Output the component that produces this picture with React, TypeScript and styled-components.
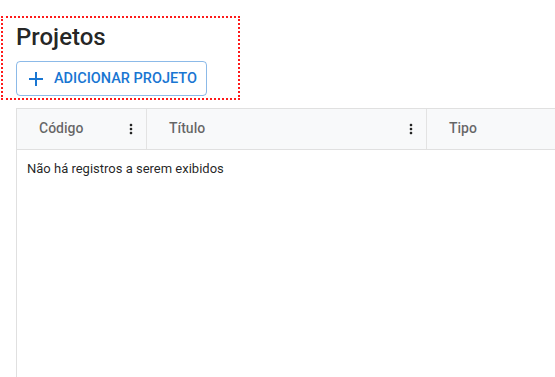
import styled, { createGlobalStyle } from "styled-components";

const GlobalStyle = createGlobalStyle`
  body {
    margin: 0;
    background: #fff;
    font-family: Roboto, "Liberation Sans", sans-serif;
    overflow: hidden;
  }
`;

const Page = styled.div`
  padding-top: 18px;
  width: 555px;
  height: 377px;
  box-sizing: border-box;
  display: flex;
  flex-direction: column;
`;

const HeaderBox = styled.section`
  margin-left: 3px;
  width: 235px;
  height: 80px;
  box-sizing: border-box;
  padding: 3px 0 0 13px;
  outline: 2px dotted #ff1a1a;
  display: flex;
  flex-direction: column;
  align-items: flex-start;
`;

const Title = styled.h1`
  margin: 0;
  font-size: 24px;
  line-height: 32px;
  font-weight: 500;
  color: rgba(0, 0, 0, 0.87);
`;

const OutlinedButton = styled.button`
  margin-top: 8px;
  height: 35px;
  box-sizing: border-box;
  display: inline-flex;
  align-items: center;
  gap: 6px;
  padding: 0 9px 0 7px;
  background: transparent;
  border: 1px solid rgba(25, 118, 210, 0.5);
  border-radius: 4px;
  color: #1976d2;
  font-family: Roboto, "Liberation Sans", sans-serif;
  font-size: 14.5px;
  font-weight: 500;
  letter-spacing: 0;
  text-transform: uppercase;
  cursor: pointer;

  svg {
    width: 24px;
    height: 24px;
    fill: currentColor;
  }
`;

const Grid = styled.div`
  margin: 10px 0 0 16px;
  flex: 1;
  display: flex;
  flex-direction: column;
  border-top: 1px solid #e0e0e0;
  border-left: 1px solid #e0e0e0;
`;

const HeadRow = styled.div`
  display: flex;
  height: 40px;
  background: #f8f9fa;
  border-bottom: 1px solid #e0e0e0;
`;

const HeadCell = styled.div<{ $width?: number }>`
  ${(p) => (p.$width ? `width: ${p.$width}px;` : "flex: 1;")}
  box-sizing: border-box;
  display: flex;
  align-items: center;
  justify-content: space-between;
  padding: 0 7px 0 22px;
  border-right: 1px solid #e3e3e3;
  font-size: 14px;
  font-weight: 500;
  color: rgba(0, 0, 0, 0.6);

  &:last-child {
    border-right: none;
  }

  span {
    margin-bottom: 3px;
  }

  svg {
    width: 16px;
    height: 16px;
    margin-bottom: 1px;
    fill: rgba(0, 0, 0, 0.87);
  }
`;

const EmptyMessage = styled.div`
  padding: 9px 10px;
  font-size: 13px;
  line-height: 20px;
  color: rgba(0, 0, 0, 0.87);
`;

const MoreIcon = () => (
  <svg viewBox="0 0 24 24">
    <path d="M12 8c1.1 0 2-.9 2-2s-.9-2-2-2-2 .9-2 2 .9 2 2 2zm0 2c-1.1 0-2 .9-2 2s.9 2 2 2 2-.9 2-2-.9-2-2-2zm0 6c-1.1 0-2 .9-2 2s.9 2 2 2 2-.9 2-2-.9-2-2-2z" />
  </svg>
);

const columns = [
  { title: "Código", width: 130, menu: true },
  { title: "Título", width: 280, menu: true },
  { title: "Tipo", menu: false },
];

export default function App() {
  return (
    <Page>
      <GlobalStyle />
      <HeaderBox>
        <Title>Projetos</Title>
        <OutlinedButton>
          <svg viewBox="0 0 24 24">
            <path d="M19 13h-6v6h-2v-6H5v-2h6V5h2v6h6v2z" />
          </svg>
          Adicionar Projeto
        </OutlinedButton>
      </HeaderBox>
      <Grid>
        <HeadRow>
          {columns.map((c) => (
            <HeadCell key={c.title} $width={c.width}>
              <span>{c.title}</span>
              {c.menu && <MoreIcon />}
            </HeadCell>
          ))}
        </HeadRow>
        <EmptyMessage>Não há registros a serem exibidos</EmptyMessage>
      </Grid>
    </Page>
  );
}
